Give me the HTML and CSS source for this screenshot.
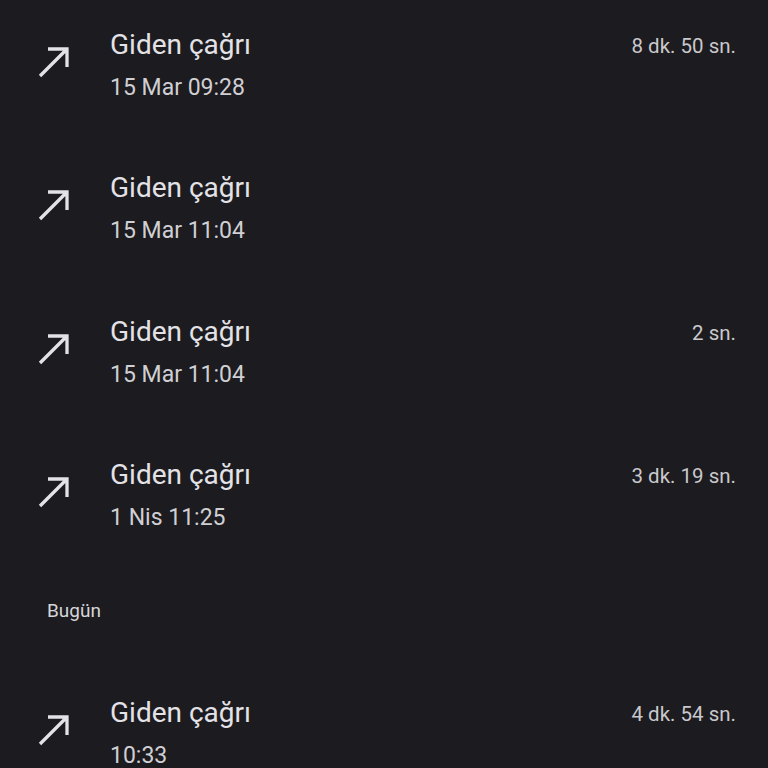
FILE: index.html
```html
<!DOCTYPE html>
<html lang="tr">
<head>
<meta charset="utf-8">
<title>Arama geçmişi</title>
<link rel="stylesheet" href="styles.css">
</head>
<body>
<main class="call-list">
  <div class="call-row">
    <div class="call-icon"><svg viewBox="0 0 40 40" width="40" height="40"><path d="M14 7H33V25M33 7L6 34" /></svg></div>
    <div class="call-text">
      <div class="call-title">Giden çağrı</div>
      <div class="call-date">15 Mar 09:28</div>
    </div>
    <div class="call-duration">8 dk. 50 sn.</div>
  </div>
  <div class="call-row">
    <div class="call-icon"><svg viewBox="0 0 40 40" width="40" height="40"><path d="M14 7H33V25M33 7L6 34" /></svg></div>
    <div class="call-text">
      <div class="call-title">Giden çağrı</div>
      <div class="call-date">15 Mar 11:04</div>
    </div>
    <div class="call-duration"></div>
  </div>
  <div class="call-row">
    <div class="call-icon"><svg viewBox="0 0 40 40" width="40" height="40"><path d="M14 7H33V25M33 7L6 34" /></svg></div>
    <div class="call-text">
      <div class="call-title">Giden çağrı</div>
      <div class="call-date">15 Mar 11:04</div>
    </div>
    <div class="call-duration">2 sn.</div>
  </div>
  <div class="call-row">
    <div class="call-icon"><svg viewBox="0 0 40 40" width="40" height="40"><path d="M14 7H33V25M33 7L6 34" /></svg></div>
    <div class="call-text">
      <div class="call-title">Giden çağrı</div>
      <div class="call-date">1 Nis 11:25</div>
    </div>
    <div class="call-duration">3 dk. 19 sn.</div>
  </div>
  <div class="section-header">Bugün</div>
  <div class="call-row">
    <div class="call-icon"><svg viewBox="0 0 40 40" width="40" height="40"><path d="M14 7H33V25M33 7L6 34" /></svg></div>
    <div class="call-text">
      <div class="call-title">Giden çağrı</div>
      <div class="call-date">10:33</div>
    </div>
    <div class="call-duration">4 dk. 54 sn.</div>
  </div>
</main>
</body>
</html>
```
FILE: styles.css
```css
html, body {
  margin: 0;
  padding: 0;
  background: #1c1b1f;
  height: 100%;
  overflow: hidden;
}

body {
  font-family: Roboto, "Noto Sans", sans-serif;
  color: #e3e2e6;
}

.call-list {
  display: flex;
  flex-direction: column;
}

.call-row {
  display: flex;
  align-items: flex-start;
  height: 143.33px;
  box-sizing: border-box;
  padding: 29px 32px 0 0;
}

.call-icon {
  width: 110px;
  padding: 13px 0 0 34px;
  box-sizing: border-box;
  flex: none;
}

.call-icon svg {
  display: block;
  fill: none;
  stroke: #e3e2e6;
  stroke-width: 3.3;
}

.call-text {
  flex: 1;
  display: flex;
  flex-direction: column;
  gap: 13px;
}

.call-title {
  font-size: 28px;
  line-height: 32px;
  color: #e3e2e6;
}

.call-date {
  font-size: 23px;
  line-height: 28px;
  color: #d0cfd3;
}

.call-duration {
  font-size: 20.5px;
  line-height: 24px;
  margin-top: 5px;
  color: #c9c8cc;
}

.section-header {
  font-size: 19px;
  line-height: 24px;
  padding: 26px 0 45px 47px;
  color: #d6d5d9;
}
```
